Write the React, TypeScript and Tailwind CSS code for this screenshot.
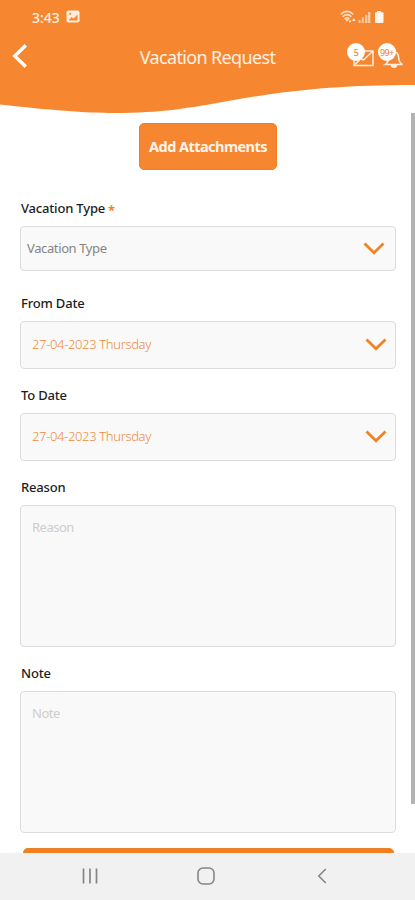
import type { ReactNode } from 'react';

function Chevron() {
  return (
    <svg width="22" height="14" viewBox="0 0 22 14" fill="none" stroke="#ef8426" strokeWidth="2.8">
      <path d="M1.5 1.5 L11 10.7 L20.5 1.5" />
    </svg>
  );
}

function StatusBar() {
  return (
    <div className="flex h-[34px] items-center pl-8 pr-[31px] text-[#fff1e4]">
      <span className="w-[28px] text-[14px] font-medium">3:43</span>
      <svg className="mb-px ml-[6px]" width="14" height="13" viewBox="0 0 14 13">
        <rect x="0.5" y="0.5" width="13" height="12" rx="2" fill="#ffeddd" />
        <path d="M2.5 10.5 L5.5 7 L7.5 8.5 L11.5 4.5 V10.5 Z" fill="#f68a34" />
        <circle cx="4.3" cy="3.8" r="1.1" fill="#f68a34" />
      </svg>
      <div className="ml-auto flex items-center">
        <svg width="44" height="16" viewBox="0 0 44 16">
          <g fill="none" stroke="#ffe3cb" strokeWidth="1.6" strokeLinecap="round">
            <path d="M1.2 5 C4.5 1.5 9.5 1.5 12.8 5" />
            <path d="M3.2 7.3 C5.5 5 8.5 5 10.8 7.3" />
            <path d="M5.2 9.6 C6.3 8.6 7.7 8.6 8.8 9.6" />
          </g>
          <path d="M7 12.4 L5.2 10.3 H8.8 Z M10 14 L8.4 11.5 H11.6 Z M13.8 9 L12 12 H15.6 Z" fill="#ffeddd" />
          <g fill="#fcc9a0">
            <rect x="18.5" y="11" width="2" height="3" />
            <rect x="21.8" y="8.5" width="2" height="5.5" />
            <rect x="25" y="6" width="2.4" height="8" />
            <rect x="28" y="3" width="2.4" height="11" />
          </g>
          <path d="M37 2 H41 V3.3 H42.5 Q43.5 3.3 43.5 4.3 V12.8 Q43.5 14 42.5 14 H36 Q35 14 35 12.8 V4.3 Q35 3.3 36 3.3 H37 Z" fill="#fff5ec" />
        </svg>
      </div>
    </div>
  );
}

function Badge({ children }: { children: ReactNode }) {
  return (
    <span className="absolute left-0 top-[-1px] flex h-[18px] w-[18px] items-center justify-center rounded-full bg-white text-[9px] font-medium leading-none tracking-[-0.4px] text-[#f68a34]">
      {children}
    </span>
  );
}

function Header() {
  return (
    <header className="relative h-[113px] shrink-0">
      <svg className="absolute inset-0" width="415" height="114" viewBox="0 0 415 114">
        <path
          d="M0 0 H415 V85 C340 85 290 90 228 101 C190 108 160 113 115 113 C85 113 50 110 0 104.5 Z"
          fill="#f68730"
        />
      </svg>
      <div className="relative">
        <StatusBar />
        <div className="grid h-[46px] grid-cols-[1fr_auto_1fr] items-center">
          <svg className="mb-[2px] ml-3" width="16" height="26" viewBox="0 0 16 26" fill="none" stroke="#fff" strokeWidth="3.4">
            <path d="M13.8 2.2 L2.8 13 L13.8 23.8" />
          </svg>
          <h1 className="text-[18px] leading-6 tracking-[-0.65px] text-[#fff1e4]">Vacation Request</h1>
          <div className="mr-[11px] flex justify-end gap-[3px]">
            <div className="relative h-[26px] w-[28px]">
              <svg width="28" height="26" viewBox="0 0 28 26" fill="none" stroke="#ffeddd" strokeWidth="1.5">
                <path d="M7 7 H26 V21.5 H7 Z M25.5 7.5 L16.5 16 L14 15 M7.5 21 L13 15.5" />
              </svg>
              <Badge>5</Badge>
            </div>
            <div className="relative h-[26px] w-[26px]">
              <svg width="26" height="26" viewBox="0 0 26 26" fill="none" stroke="#ffeddd" strokeWidth="1.6">
                <path d="M7.5 20.5 C10 19 10 17 10.3 13.5 C10.5 9 12.5 7.5 15 7.5 C18.5 7.5 20.3 9 20.6 13.5 C20.8 17 21.5 19 24.5 20.5 Z" />
                <path d="M13.5 21 C13.5 24 18.5 24 18.5 21" fill="#ffeddd" />
              </svg>
              <Badge>99+</Badge>
            </div>
          </div>
        </div>
      </div>
    </header>
  );
}

function Label({ children }: { children: ReactNode }) {
  return (
    <label className="flex h-5 items-center pl-px text-[13px] font-medium tracking-[-0.18px] text-[#1d1d1d]">
      {children}
    </label>
  );
}

function DateField({ value }: { value: string }) {
  return (
    <button className="mt-[7px] flex h-[48px] w-full items-center justify-between rounded-[4px] border border-[#dcdcdc] bg-[#f9f9f9] pl-[11px] pr-[8px] text-[13px] font-light tracking-[-0.35px] text-[#ee8b3e]">
      {value}
      <Chevron />
    </button>
  );
}

function TextBox({ placeholder }: { placeholder: string }) {
  return (
    <div className="mt-[7px] h-[142px] rounded-[4px] border border-[#dcdcdc] bg-[#f9f9f9] px-[11px] pt-[11px] text-[13px] leading-5 tracking-[-0.5px] text-[#cdcdcd]">
      {placeholder}
    </div>
  );
}

function NavBar() {
  return (
    <nav className="grid h-[47px] shrink-0 grid-cols-[180px_52px_1fr] items-center bg-[#f1f1f1] pb-px text-[#858585]">
      <svg className="justify-self-center" width="18" height="18" viewBox="0 0 18 18" fill="none" stroke="currentColor" strokeWidth="1.7">
        <path d="M2.5 1.5 V16.5 M9 1.5 V16.5 M15.5 1.5 V16.5" />
      </svg>
      <svg className="justify-self-center" width="18" height="18" viewBox="0 0 18 18" fill="none" stroke="currentColor" strokeWidth="1.6">
        <rect x="1" y="1" width="16" height="16" rx="5" />
      </svg>
      <svg className="ml-[85px]" width="10" height="18" viewBox="0 0 10 18" fill="none" stroke="currentColor" strokeWidth="1.6">
        <path d="M8.8 2 L1.8 9 L8.8 16" />
      </svg>
    </nav>
  );
}

export default function App() {
  return (
    <div className="flex h-[900px] w-[415px] flex-col overflow-hidden bg-white font-['Noto_Sans',sans-serif]">
      <Header />
      <div className="flex min-h-0 flex-1">
        <main className="w-[411px] overflow-hidden pl-5 pr-[15px] pt-[10px]">
          <button className="ml-[119px] block h-[47px] w-[138px] rounded-[5px] border border-[#ee7f22] bg-[#f68730] text-[14.5px] font-bold tracking-[-0.55px] text-[#fff5ec]">
            Add Attachments
          </button>

          <div className="mt-[29px]">
            <Label>
              Vacation Type <span className="ml-[3px] mt-[3px] text-[13px] font-bold text-[#ef8426]">*</span>
            </Label>
            <button className="mt-[7px] flex h-[45px] w-full items-center justify-between rounded-[4px] border border-[#dcdcdc] bg-[#f9f9f9] pl-[6px] pr-[10px] text-[13px] tracking-[-0.38px] text-[#858585]">
              Vacation Type
              <Chevron />
            </button>
          </div>

          <div className="mt-[23px]">
            <Label>From Date</Label>
            <DateField value="27-04-2023 Thursday" />
          </div>

          <div className="mt-[17px]">
            <Label>To Date</Label>
            <DateField value="27-04-2023 Thursday" />
          </div>

          <div className="mt-[17px]">
            <Label>Reason</Label>
            <TextBox placeholder="Reason" />
          </div>

          <div className="mt-[17px]">
            <Label>Note</Label>
            <TextBox placeholder="Note" />
          </div>

          <div className="ml-[3px] mr-[2px] mt-[15px] h-[46px] rounded-[5px] bg-[#ee7f22]" />
        </main>
        <div className="h-[691px] w-[4px] bg-[#b3b3b3]" />
      </div>
      <NavBar />
    </div>
  );
}
